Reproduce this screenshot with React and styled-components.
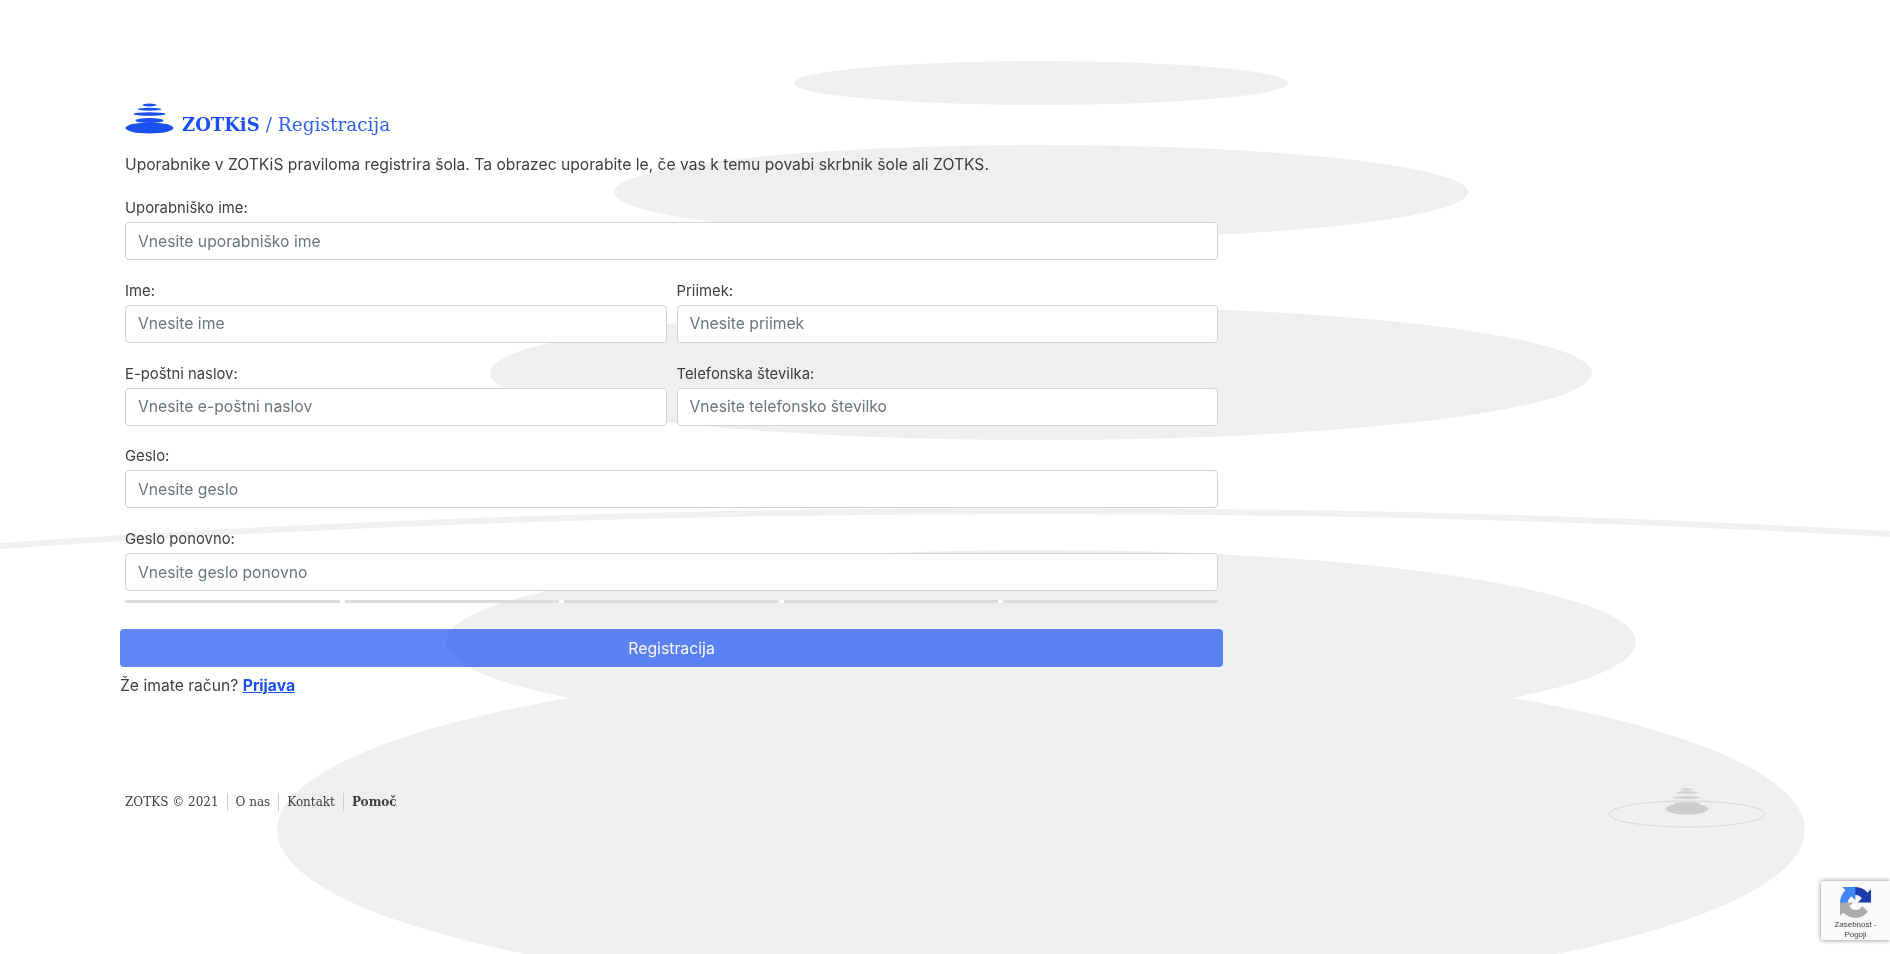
import React from "react";
import styled, { createGlobalStyle } from "styled-components";

const GlobalStyle = createGlobalStyle`
  html, body {
    margin: 0;
    padding: 0;
    background: #fff;
    height: 100%;
    overflow: hidden;
  }
  body {
    font-family: "Inter", "Liberation Sans", sans-serif;
    color: #3c4043;
  }
`;

function Stones() {
  return (
    <BackgroundSvg viewBox="0 0 1890 954">
      <ellipse cx="1041" cy="83" rx="247" ry="22" fill="#efefef" />
      <ellipse cx="1041" cy="192" rx="427" ry="47" fill="#efefef" />
      <ellipse cx="1041" cy="373" rx="551" ry="67" fill="#efefef" />
      <ellipse cx="1040" cy="931" rx="2600" ry="420" fill="none" stroke="#f0f0f0" strokeWidth="6" />
      <ellipse cx="1041" cy="642" rx="595" ry="92" fill="#efefef" />
      <ellipse cx="1041" cy="830" rx="764" ry="168" fill="#efefef" />
    </BackgroundSvg>
  );
}

function Logo() {
  return (
    <svg width="49" height="31" viewBox="0 0 49 31">
      <ellipse cx="24.5" cy="2" rx="7" ry="1.4" fill="#1a50f0" />
      <ellipse cx="24.5" cy="6.3" rx="12" ry="1.5" fill="#1a50f0" />
      <ellipse cx="24.5" cy="11" rx="16" ry="1.7" fill="#1a50f0" />
      <ellipse cx="24.5" cy="17.5" rx="14" ry="2.5" fill="#1a50f0" />
      <ellipse cx="24.5" cy="25" rx="24" ry="5.5" fill="#1a50f0" />
    </svg>
  );
}

function FooterLogo() {
  return (
    <svg width="158" height="40" viewBox="0 0 158 40">
      <ellipse cx="79" cy="26" rx="78" ry="13" fill="none" stroke="#d8d8d8" />
      <ellipse cx="79" cy="1.5" rx="6" ry="1.2" fill="#d2d2d2" />
      <ellipse cx="79" cy="4.5" rx="11" ry="1.3" fill="#d2d2d2" />
      <ellipse cx="79" cy="9.5" rx="14" ry="1.5" fill="#d2d2d2" />
      <ellipse cx="79" cy="16" rx="13" ry="2" fill="#cdcdcd" />
      <ellipse cx="79" cy="21" rx="21" ry="5.5" fill="#cdcdcd" />
    </svg>
  );
}

function RecaptchaIcon() {
  return (
    <svg width="37" height="37" viewBox="0 0 64 64">
      <path
        d="M64 31.955l-.033-1.37V4.687l-7.16 7.16C50.948 4.674 42.033.093 32.05.093c-10.4 0-19.622 4.96-25.458 12.64l11.736 11.86a15.55 15.55 0 0 1 4.754-5.334c2.05-1.6 4.952-2.906 8.968-2.906.485 0 .86.057 1.135.163 4.976.393 9.288 3.14 11.828 7.124l-8.307 8.307c10.522-.04 22.4-.066 27.295.006"
        fill="#1c3aa9"
      />
      <path
        d="M31.862.094l-1.37.033H4.594l7.16 7.16C4.58 13.147 0 22.06 0 32.046c0 10.4 4.96 19.622 12.64 25.458L24.5 45.768a15.55 15.55 0 0 1-5.334-4.754c-1.6-2.05-2.906-4.952-2.906-8.968 0-.485.057-.86.163-1.135.393-4.976 3.14-9.288 7.124-11.828l8.307 8.307c-.04-10.522-.066-22.4.006-27.295"
        fill="#4285f4"
      />
      <path
        d="M.002 32.047l.033 1.37V59.31l7.16-7.16c5.86 7.173 14.774 11.754 24.76 11.754 10.4 0 19.622-4.96 25.458-12.64L45.677 39.4a15.55 15.55 0 0 1-4.754 5.334c-2.05 1.6-4.952 2.906-8.968 2.906-.485 0-.86-.057-1.135-.163-4.976-.393-9.288-3.14-11.828-7.124l8.307-8.307c-10.522.04-22.4.066-27.295-.006"
        fill="#ababab"
      />
    </svg>
  );
}

function Field({ label, placeholder }) {
  return (
    <FieldWrap>
      <Label>{label}</Label>
      <Input placeholder={placeholder} />
    </FieldWrap>
  );
}

export default function App() {
  return (
    <>
      <GlobalStyle />
      <Stones />
      <Page>
        <FormCol>
          <Inner>
            <Heading>
              <Logo />
              <Brand>ZOTKiS</Brand>
              <HeadingRest>/ Registracija</HeadingRest>
            </Heading>
            <Intro>
              Uporabnike v ZOTKiS praviloma registrira šola. Ta obrazec uporabite le, če vas k temu
              povabi skrbnik šole ali ZOTKS.
            </Intro>
            <Field label="Uporabniško ime:" placeholder="Vnesite uporabniško ime" />
            <Row>
              <Field label="Ime:" placeholder="Vnesite ime" />
              <Field label="Priimek:" placeholder="Vnesite priimek" />
            </Row>
            <Row>
              <Field label="E-poštni naslov:" placeholder="Vnesite e-poštni naslov" />
              <Field label="Telefonska številka:" placeholder="Vnesite telefonsko številko" />
            </Row>
            <Field label="Geslo:" placeholder="Vnesite geslo" />
            <Field label="Geslo ponovno:" placeholder="Vnesite geslo ponovno" />
            <Strength>
              <StrengthBar />
              <StrengthBar />
              <StrengthBar />
              <StrengthBar />
              <StrengthBar />
            </Strength>
          </Inner>
          <SubmitButton>Registracija</SubmitButton>
          <LoginLine>
            Že imate račun? <LoginLink href="#">Prijava</LoginLink>
          </LoginLine>
        </FormCol>
        <Footer>
          <FooterLinks>
            <FooterItem>ZOTKS © 2021</FooterItem>
            <FooterItem>O nas</FooterItem>
            <FooterItem>Kontakt</FooterItem>
            <FooterItem $bold>Pomoč</FooterItem>
          </FooterLinks>
          <FooterLogo />
        </Footer>
      </Page>
      <Recaptcha>
        <RecaptchaIcon />
        <RecaptchaText>Zasebnost - Pogoji</RecaptchaText>
      </Recaptcha>
    </>
  );
}

const BackgroundSvg = styled.svg`
  position: fixed;
  left: 0;
  top: 0;
  width: 1890px;
  height: 954px;
`;

const Page = styled.div`
  position: relative;
  width: 1890px;
  height: 954px;
  box-sizing: border-box;
  padding: 103px 0 0 120px;
`;

const FormCol = styled.div`
  width: 1103px;
`;

const Inner = styled.div`
  padding: 0 5px;
  display: flex;
  flex-direction: column;
`;

const Heading = styled.div`
  display: flex;
  align-items: flex-end;
  height: 31px;
  margin-bottom: 19px;
`;

const Brand = styled.span`
  font-family: "DejaVu Serif", "Liberation Serif", serif;
  font-weight: 700;
  font-size: 18px;
  line-height: 24px;
  color: #1a50f0;
  margin: 0 0 -3px 8px;
`;

const HeadingRest = styled.span`
  font-family: "DejaVu Serif", "Liberation Serif", serif;
  font-size: 18.5px;
  line-height: 24px;
  color: #2f62f5;
  margin: 0 0 -3px 6px;
`;

const Intro = styled.p`
  margin: 0 0 19px;
  font-size: 15.67px;
  line-height: 24px;
  color: #3c4043;
`;

const FieldWrap = styled.div`
  display: flex;
  flex-direction: column;
  flex: 1 1 0;
  margin-bottom: 18.75px;
`;

const Label = styled.label`
  font-size: 14.85px;
  line-height: 24px;
  margin-bottom: 2px;
  color: #3c4043;
`;

const Input = styled.input`
  box-sizing: border-box;
  height: 38px;
  width: 100%;
  padding: 6px 12px;
  font-family: "Inter", sans-serif;
  font-size: 15.7px;
  background: #fff;
  border: 1px solid #ced4da;
  border-radius: 4px;
  outline: none;
  &::placeholder {
    color: #6c757d;
  }
`;

const Row = styled.div`
  display: flex;
  gap: 10px;
`;

const Strength = styled.div`
  display: flex;
  gap: 5px;
  margin-top: -9.75px;
  background: #fff;
`;

const StrengthBar = styled.div`
  flex: 1 1 0;
  height: 3px;
  background: #dcdcdc;
`;

const SubmitButton = styled.button`
  display: block;
  width: 100%;
  height: 38px;
  margin-top: 26px;
  border: 1px solid transparent;
  border-radius: 4px;
  background: #1c55f7;
  opacity: 0.7;
  color: #fff;
  font-family: "Inter", sans-serif;
  font-size: 15.8px;
`;

const LoginLine = styled.div`
  margin-top: 7px;
  font-size: 15.67px;
  line-height: 24px;
  color: #3c4043;
`;

const LoginLink = styled.a`
  color: #1a50f0;
  font-weight: 700;
`;

const Footer = styled.div`
  display: flex;
  justify-content: space-between;
  align-items: flex-start;
  width: 1641px;
  margin: 90px 0 0 5px;
`;

const FooterLinks = styled.div`
  display: flex;
  align-items: center;
  margin-top: 5px;
`;

const FooterItem = styled.span`
  font-family: "DejaVu Serif", "Liberation Serif", serif;
  font-size: 12px;
  line-height: 18px;
  color: #3c4043;
  font-weight: ${(p) => (p.$bold ? 700 : 400)};
  padding: 0 8px;
  border-left: 1px solid #ccc;
  &:first-child {
    padding-left: 0;
    border-left: none;
  }
`;

const Recaptcha = styled.div`
  position: fixed;
  right: 0;
  bottom: 14px;
  box-sizing: border-box;
  width: 69px;
  height: 59px;
  background: #f9f9f9;
  box-shadow: 0 0 5px #808080;
  border-radius: 2px 0 0 2px;
  overflow: hidden;
  display: flex;
  flex-direction: column;
  align-items: center;
  padding-top: 6px;
`;

const RecaptchaText = styled.div`
  font-family: "Liberation Sans", sans-serif;
  font-size: 8px;
  line-height: 10px;
  width: 54px;
  text-align: center;
  color: #444;
  margin-top: 2px;
`;
